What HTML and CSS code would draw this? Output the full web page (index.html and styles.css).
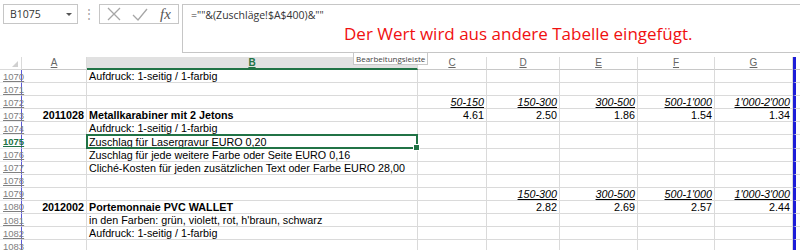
FILE: index.html
```html
<!DOCTYPE html>
<html>
<head>
    <title>Zuschläge</title>
    <link rel="stylesheet" href="styles.css">
</head>
<body>
    <div class="topbar">
        <div class="namebox">
            <span>B1075</span>
            <span class="drop"></span>
        </div>
        <div class="grip">⋮</div>
        <div class="btnbox">
            <svg width="16" height="14" viewBox="0 0 16 14"><path d="M2 1 L14 13 M14 1 L2 13" stroke="#a6a6a6" stroke-width="1.3" fill="none"/></svg>
            <svg width="16" height="14" viewBox="0 0 16 14"><path d="M1 8 L6 13 L15 2" stroke="#a6a6a6" stroke-width="1.3" fill="none"/></svg>
            <span class="fx">fx</span>
        </div>
        <div class="formula">
            <div class="ftext">=""&amp;(Zuschläge!$A$400)&amp;""</div>
            <div class="note">Der Wert wird aus andere Tabelle eingefügt.</div>
        </div>
        <div class="tooltip">Bearbeitungsleiste</div>
    </div>
    <div class="sheet" id="sheet"></div>
    <script>
        const rows = [
            [1070, '', 'Aufdruck: 1-seitig / 1-farbig'],
            [1071, '', ''],
            [1072, '', '', ['50-150', '150-300', '300-500', "500-1'000", "1'000-2'000"], 'range'],
            [1073, '2011028', 'Metallkarabiner mit 2 Jetons', ['4.61', '2.50', '1.86', '1.54', '1.34'], 'bold'],
            [1074, '', 'Aufdruck: 1-seitig / 1-farbig'],
            [1075, '', 'Zuschlag für Lasergravur EURO 0,20', null, 'sel'],
            [1076, '', 'Zuschlag für jede weitere Farbe oder Seite EURO 0,16'],
            [1077, '', 'Cliché-Kosten für jeden zusätzlichen Text oder Farbe EURO 28,00'],
            [1078, '', ''],
            [1079, '', '', ['', '150-300', '300-500', "500-1'000", "1'000-3'000"], 'range'],
            [1080, '2012002', 'Portemonnaie PVC WALLET', ['', '2.82', '2.69', '2.57', '2.44'], 'bold'],
            [1081, '', "in den Farben: grün, violett, rot, h'braun, schwarz"],
            [1082, '', 'Aufdruck: 1-seitig / 1-farbig'],
            [1083, '', '']
        ];

        function cell(cls, text) {
            const div = document.createElement('div');
            div.className = 'cell ' + cls;
            if (text) {
                const span = document.createElement('span');
                span.textContent = text;
                div.appendChild(span);
            }
            return div;
        }

        const sheet = document.getElementById('sheet');
        sheet.appendChild(cell('corner', ''));
        ['A', 'B', 'C', 'D', 'E', 'F', 'G'].forEach(letter => {
            sheet.appendChild(cell('colhead' + (letter === 'B' ? ' active' : ''), letter));
        });
        sheet.appendChild(cell('colhead rest', ''));

        rows.forEach(row => {
            const [num, a, b, vals, kind] = row;
            sheet.appendChild(cell('rowhead' + (kind === 'sel' ? ' active' : ''), String(num)));
            sheet.appendChild(cell('num' + (kind === 'bold' ? ' bold' : ''), a));
            sheet.appendChild(cell('text' + (kind === 'bold' ? ' bold' : '') + (kind === 'sel' ? ' selected' : ''), b));
            for (let i = 0; i < 5; i++) {
                const v = vals ? vals[i] : '';
                sheet.appendChild(cell('num' + (kind === 'range' ? ' range' : ''), v));
            }
            sheet.appendChild(cell('rest', ''));
        });
    </script>
</body>
</html>
```

FILE: styles.css
```css
* {
    box-sizing: border-box;
}
body {
    margin: 0;
    background: #fff;
    font-family: 'Liberation Sans', Arial, sans-serif;
    overflow: hidden;
}
.topbar {
    position: relative;
    display: flex;
    align-items: flex-start;
    height: 57px;
    padding-top: 4px;
}
.namebox {
    display: flex;
    align-items: center;
    justify-content: space-between;
    width: 75px;
    height: 20px;
    margin-left: 3px;
    padding: 0 5px 0 6px;
    border: 1px solid #c6c6c6;
    font-family: 'Open Sans', sans-serif;
    font-size: 10.5px;
    color: #333;
}
.drop {
    width: 0;
    height: 0;
    border-left: 3px solid transparent;
    border-right: 3px solid transparent;
    border-top: 3px solid #555;
}
.grip {
    width: 21px;
    text-align: center;
    color: #a0a0a0;
    font-size: 12px;
    line-height: 20px;
}
.btnbox {
    display: flex;
    align-items: center;
    gap: 10px;
    width: 80px;
    height: 20px;
    padding-left: 6px;
    border: 1px solid #c6c6c6;
}
.fx {
    font-family: 'Liberation Serif', serif;
    font-style: italic;
    font-size: 15px;
    color: #555;
    margin-left: 2px;
}
.formula {
    flex: 1;
    height: 49px;
    margin-left: 3px;
    padding: 3px 8px;
    border: 1px solid #c6c6c6;
    border-right: none;
    font-family: 'Open Sans', sans-serif;
}
.ftext {
    font-size: 10.5px;
    color: #333;
    line-height: 14px;
}
.note {
    margin: 1px 0 0 153px;
    font-size: 17px;
    color: #f01010;
    line-height: 22px;
}
.tooltip {
    position: absolute;
    left: 353px;
    top: 52px;
    padding: 0 2px;
    background: #fff;
    border: 1px solid #c8c8c8;
    font-family: 'Open Sans', sans-serif;
    font-size: 8px;
    line-height: 11px;
    color: #444;
    z-index: 2;
}
.sheet {
    display: grid;
    grid-template-columns: 22px 65px 331px 69px 73px 78px 77px 78px 1fr;
    grid-template-rows: 13px;
    grid-auto-rows: 13.1px;
}
.cell {
    display: flex;
    align-items: flex-end;
    overflow: visible;
    white-space: nowrap;
    border-right: 1px solid #dadada;
    border-bottom: 1px solid #dadada;
    font-size: 10.75px;
    line-height: 12px;
    color: #000;
}
.corner {
    position: relative;
    border-color: #dadada;
}
.corner::after {
    content: '';
    position: absolute;
    right: 3px;
    bottom: 2px;
    border-left: 6px solid transparent;
    border-bottom: 6px solid #d0d0d0;
}
.colhead {
    justify-content: center;
    align-items: center;
    font-size: 10px;
    color: #666;
    text-decoration: underline;
    border-bottom: 1px solid #c8c8c8;
}
.colhead.active {
    background: #e1e1e1;
    color: #217346;
    font-weight: bold;
    border-bottom: 2px solid #217346;
}
.colhead.rest {
    border-right: none;
}
.rowhead {
    align-items: center;
    padding-left: 3px;
    font-size: 9.5px;
    line-height: 11px;
    color: #808080;
    text-decoration: underline;
    border-right: 1px solid #5a5ad6;
    border-bottom-color: #ececec;
}
.rowhead.active {
    color: #217346;
    font-weight: bold;
}
.num {
    justify-content: flex-end;
    padding-right: 2px;
}
.text {
    padding-left: 2px;
}
.bold {
    font-weight: bold;
}
.range span {
    font-style: italic;
    text-decoration: underline;
}
.rest {
    border-right: none;
    border-left: 3px solid #1d1dd8;
}
.selected {
    position: relative;
}
.selected::after {
    content: '';
    position: absolute;
    left: -1px;
    top: -1px;
    right: -1px;
    bottom: -1px;
    border: 2px solid #217346;
}
.selected::before {
    content: '';
    position: absolute;
    right: -3px;
    bottom: -3px;
    width: 5px;
    height: 5px;
    background: #217346;
    border: 1px solid #fff;
    z-index: 1;
}
```
